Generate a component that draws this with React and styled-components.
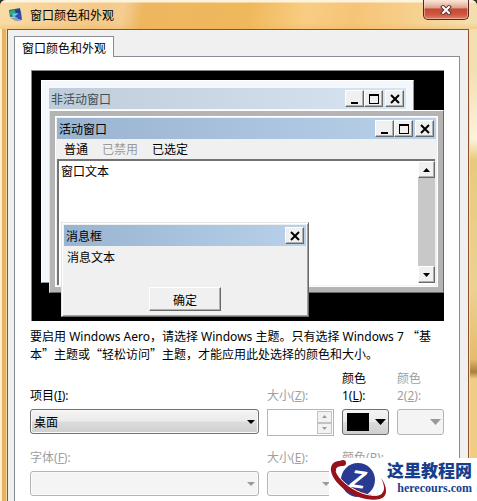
import React from 'react'
import styled, { createGlobalStyle, css } from 'styled-components'

const GlobalStyle = createGlobalStyle`
  * {
    box-sizing: border-box;
  }
  body {
    margin: 0;
    overflow: hidden;
    background: #3a3128;
    color: #000;
    font-family: 'Noto Sans CJK SC', 'Noto Sans', sans-serif;
    font-size: 12px;
    line-height: 17px;
  }
  button,
  input,
  select {
    margin: 0;
    padding: 0;
    color: inherit;
    font: inherit;
  }
  h1,
  p {
    margin: 0;
    font-size: 12px;
    font-weight: 400;
  }
`

const raised = css`
  background: #f0f0f0;
  border: 1px solid;
  border-color: #fff #696969 #696969 #fff;
  box-shadow: inset -1px -1px 0 #b0b0b0;
`

/* ---- outer dialog ---- */

const Dialog = styled.main`
  position: relative;
  display: flex;
  flex-direction: column;
  height: 100vh;
  padding: 0 8px;
  border-radius: 6px 6px 0 0;
  background:
    linear-gradient(90deg, #fdf0d2 0 2px, #e7b063 2px 6px, #f7dba5 6px 7px, #7c5a2c 7px 8px, transparent 8px)
      0 29px no-repeat,
    linear-gradient(#f3dfae, #f4dfb2 40px, #fdf2dc 110px, #e9ca7c 131px, #ecd191 260px, #e5bd6c 330px, #a97f3f 343px, #efcd85 350px)
      right 29px / 7px 100% no-repeat,
    #f5dfb2;
`

const TitleBar = styled.header`
  display: flex;
  flex: none;
  align-items: center;
  height: 29px;
  margin: 0 -8px;
  padding: 0 8px 0 9px;
  border-radius: 6px 6px 0 0;
  background:
    linear-gradient(#fdf4e0 0 2px, transparent 3px 23px, rgba(240, 180, 90, 0.4)),
    linear-gradient(
      100deg,
      #f9dca6 0,
      #f4c988 20%,
      #f5cd92 26%,
      #eeb65f 30%,
      #f0b85c 52%,
      #f8cd83 64%,
      #f6c477 74%,
      #f6d08d 86%,
      #f3dfae 98%
    );
  svg {
    margin-right: 7px;
  }
`

const Title = styled.h1`
  flex: 1;
  line-height: 17px;
`

const CloseButton = styled.button`
  display: flex;
  align-items: center;
  justify-content: center;
  align-self: flex-start;
  width: 46px;
  height: 20px;
  border: 1px solid #5b2420;
  border-top: 0;
  border-radius: 0 0 5px 5px;
  background: linear-gradient(#f8ecdc, #e0a48f 40%, #c24a36 48%, #cf5540 75%, #df8064);
  box-shadow: inset 0 0 0 1px rgba(255, 220, 205, 0.5);
  svg {
    margin: 0;
  }
`

const Client = styled.div`
  display: flex;
  flex: 1;
  flex-direction: column;
  padding: 6px 8px 0 6px;
  border-top: 1px solid #7c5a2c;
  border-right: 1px solid #8e4f2c;
  background: #f0f0f0;
`

const Tab = styled.button`
  position: relative;
  z-index: 1;
  align-self: flex-start;
  height: 21px;
  margin-bottom: -1px;
  padding: 0 7px;
  border: 1px solid #898c95;
  border-bottom: 0;
  background: #fff;
`

const TabPanel = styled.section`
  flex: 1;
  padding: 13px 15px 0;
  border: 1px solid #898c95;
  border-bottom: 0;
  background: #fff;
`

/* ---- preview desktop ---- */

const Desktop = styled.div`
  position: relative;
  height: 251px;
  margin-left: 1px;
  border: solid #8a8a8a;
  border-width: 1px 0 0 1px;
  background: #000;
`

const InactiveWindow = styled.div`
  position: absolute;
  top: 9px;
  right: 30px;
  bottom: 38px;
  left: 9px;
  padding: 7px;
  border: 1px solid;
  border-color: #fff #8f979f #8f979f #fff;
  background: #f4f8fd;
`

const ActiveWindow = styled.div`
  position: absolute;
  top: 39px;
  right: 0;
  bottom: 28px;
  left: 17px;
  padding: 1px;
  border: 1px solid;
  border-color: #fff #696969 #696969 #e3e3e3;
  background: #b4b4b4;
`

const ActiveBody = styled.div`
  display: flex;
  flex-direction: column;
  height: calc(100% - 8px);
  margin: 4px;
  padding: 1px;
  border: 1px solid #fff;
  background: #f0f0f0;
`

const MessageBox = styled.div`
  position: absolute;
  top: 151px;
  right: 135px;
  bottom: 4px;
  left: 29px;
  display: flex;
  flex-direction: column;
  padding: 1px;
  border: 1px solid;
  border-color: #e3e3e3 #696969 #696969 #e3e3e3;
  background: #f0f0f0;
  box-shadow: inset 1px 1px 0 #fff, inset -1px -1px 0 #a0a0a0;
`

const Caption = styled.div`
  display: flex;
  flex: none;
  align-items: center;
  height: 21px;
  padding: 0 2px;
  color: ${(props) => (props.$inactive ? '#434e54' : '#000')};
  background: ${(props) =>
    props.$inactive
      ? 'linear-gradient(90deg, #bfcddb, #d7e4f2)'
      : 'linear-gradient(90deg, #99b4d1, #b9d1ea)'};
  ${MessageBox} > & {
    margin: 1px;
  }
`

const CaptionText = styled.span`
  flex: 1;
`

const CaptionButton = styled.button`
  ${raised}
  display: flex;
  align-items: center;
  justify-content: center;
  width: 19px;
  height: 17px;
  margin-left: ${(props) => (props.$apart ? '2px' : '0')};
`

const MenuBar = styled.div`
  display: flex;
  flex: none;
  gap: 14px;
  height: 20px;
  padding: 0 7px 2px;
`

const MenuItem = styled.button`
  border: 0;
  background: none;
  line-height: 17px;
  &:disabled {
    color: #9b9b9b;
  }
`

const Document = styled.div`
  display: flex;
  flex: 1;
  margin-right: 1px;
  border: solid #737373;
  border-width: 2px 0 0 2px;
  background: #fff;
`

const DocumentText = styled.p`
  flex: 1;
  padding: 1px 2px;
`

const ScrollBar = styled.div`
  display: flex;
  flex-direction: column;
  justify-content: space-between;
  width: 17px;
  margin-bottom: 2px;
  background: #c8c8c8;
`

const ScrollButton = styled.button`
  ${raised}
  display: flex;
  align-items: center;
  justify-content: center;
  height: 17px;
`

const MessageText = styled.p`
  flex: 1;
  padding: 1px 4px;
`

const OkButton = styled.button`
  ${raised}
  align-self: center;
  width: 72px;
  height: 24px;
  margin-bottom: 4px;
`

/* ---- settings ---- */

const Hint = styled.p`
  margin-top: 6px;
`

const Latin = styled.span`
  font-family: 'Noto Sans', sans-serif;
`

const Fields = styled.div`
  display: grid;
  grid-template-columns: 1fr 67px 47px 47px;
  align-items: end;
  gap: 0 8px;
  margin-top: 8px;
`

const Label = styled.label`
  padding-bottom: 5px;
  font-family: 'Noto Sans', 'Noto Sans CJK SC', sans-serif;
  color: ${(props) => (props.$disabled ? '#a0a0a0' : '#000')};
`

const ControlCell = styled.div`
  align-self: start;
  margin-bottom: ${(props) => (props.$last ? '0' : '13px')};
`

const SelectBox = styled.div`
  display: grid;
  align-items: center;
  > * {
    grid-area: 1 / 1;
  }
  svg {
    justify-self: end;
    margin-right: 4px;
    pointer-events: none;
  }
`

const Select = styled.select`
  width: 100%;
  height: 25px;
  padding: 0 3px;
  border: 1px solid #707070;
  border-radius: 3px;
  appearance: none;
  background: linear-gradient(#f4f4f4, #ebebeb 48%, #dcdcdc 52%, #cfcfcf);
  box-shadow: inset 0 0 0 1px #fafafa;
  &:disabled {
    border-color: #b4b4b4;
    background: #f4f4f4;
    opacity: 1;
  }
`

const ColorButton = styled.button`
  display: flex;
  align-items: center;
  justify-content: space-between;
  width: 100%;
  height: 26px;
  padding: 0 2px 0 4px;
  border: 1px solid #707070;
  border-radius: 3px;
  background: linear-gradient(#f4f4f4, #ebebeb 48%, #dcdcdc 52%, #cfcfcf);
  &:disabled {
    border-color: #b4b4b4;
    background: #f4f4f4;
  }
`

const Swatch = styled.span`
  width: 22px;
  height: 18px;
  background: ${(props) => props.$color};
`

const Spinner = styled.div`
  display: flex;
  height: 27px;
  padding: 1px;
  border: 1px solid #b4b4b4;
  background: #fff;
  input {
    flex: 1;
    min-width: 0;
    border: 0;
    background: #fff;
  }
`

const SpinButtons = styled.div`
  display: grid;
  width: 15px;
  button {
    display: flex;
    align-items: center;
    justify-content: center;
    border: 1px solid #c2c2c2;
    background: #f2f2f2;
  }
`

/* ---- site mark over the corner ---- */

const SiteMark = styled.footer`
  position: absolute;
  right: 0;
  bottom: 0;
  display: flex;
  height: 43px;
  background: #fff;
`

const SiteName = styled.div`
  display: flex;
  flex-direction: column;
  align-items: flex-end;
  padding: 3px 5px 0 0;
  color: #173f8d;
  strong {
    font-size: 17px;
    font-weight: 900;
    line-height: 18px;
  }
  span {
    font-family: 'Liberation Serif', serif;
    font-size: 12px;
    font-weight: 700;
    line-height: 18px;
  }
`

const Triangle = ({ size = 9, up, color = '#000' }) => {
  const h = Math.ceil(size / 2)
  return (
    <svg width={size} height={h} viewBox={`0 0 ${size} ${h}`}>
      <path d={up ? `M0 ${h}H${size}L${size / 2} 0Z` : `M0 0H${size}L${size / 2} ${h}Z`} fill={color} />
    </svg>
  )
}

const glyphs = {
  min: <path d="M3 9h7v2H3z" fill="#000" />,
  max: <path d="M2 1h10v10H2zM3 3v7h8V3z" fill="#000" fillRule="evenodd" />,
  close: <path d="M3 2l8 8M11 2l-8 8" stroke="#000" strokeWidth="2" />,
}

const CaptionControl = ({ kind, label }) => (
  <CaptionButton type="button" aria-label={label} $apart={kind === 'close'}>
    <svg width="14" height="12" viewBox="0 0 14 12">
      {glyphs[kind]}
    </svg>
  </CaptionButton>
)

const CaptionControls = () => (
  <>
    <CaptionControl kind="min" label="最小化" />
    <CaptionControl kind="max" label="最大化" />
    <CaptionControl kind="close" label="关闭" />
  </>
)

const DialogIcon = () => (
  <svg width="14" height="14" viewBox="0 0 14 14">
    <path d="M0 2l11-2 1 8-11 1z" fill="#2b6b86" />
    <path d="M1 3l5-1 1 4-6 1z" fill="#35a878" />
    <path d="M6 2l5-1 1 5-5 0z" fill="#1f3f8c" />
    <path d="M3 6l6-1 1 3-6 1z" fill="#6cc3dc" />
    <path d="M6 8l6-4 1 8-5-1z" fill="#2c4bb8" />
    <path d="M1 10l6-1 5 4-5 0z" fill="#8fa5b5" />
  </svg>
)

const SiteLogo = () => (
  <svg width="58" height="43" viewBox="0 0 58 43">
    <circle cx="29" cy="22" r="17" fill="#293a92" />
    {/* orbit: thick at the lower right, ending in a dot at the upper left */}
    <path
      d="M14 3C6 2 1 6 2 13c2 12 19 25 35 28 12 2 20 0 20-8 0-5-2-9-5-13 3 6 4 11 2 14-3 5-11 4-20 0C20 29 7 19 7 12c0-3 3-4 7-4z"
      fill="#98121c"
    />
    <path d="M7 13c3 10 18 20 29 23 8 2 14 2 17-1" fill="none" stroke="#fff" strokeWidth="1" />
    <circle cx="14" cy="5" r="3" fill="#98121c" />
    <text
      x="29"
      y="30"
      fill="#fff"
      fontFamily="Liberation Sans, sans-serif"
      fontSize="25"
      fontWeight="700"
      fontStyle="italic"
      textAnchor="middle"
      transform="rotate(8 29 22)"
    >
      Z
    </text>
  </svg>
)

const FieldLabel = ({ id, text, hotkey, disabled }) => (
  <Label htmlFor={id} $disabled={disabled}>
    {text}(<u>{hotkey}</u>):
  </Label>
)

const DropDown = ({ id, options = [], disabled }) => (
  <SelectBox>
    <Select id={id} disabled={disabled}>
      {options.map((option) => (
        <option key={option}>{option}</option>
      ))}
    </Select>
    <Triangle size={8} color={disabled ? '#9a9a9a' : '#000'} />
  </SelectBox>
)

const Preview = () => (
  <Desktop>
    <InactiveWindow>
      <Caption $inactive>
        <CaptionText>非活动窗口</CaptionText>
        <CaptionControls />
      </Caption>
    </InactiveWindow>
    <ActiveWindow>
      <ActiveBody>
        <Caption>
          <CaptionText>活动窗口</CaptionText>
          <CaptionControls />
        </Caption>
        <MenuBar>
          <MenuItem type="button">普通</MenuItem>
          <MenuItem type="button" disabled>
            已禁用
          </MenuItem>
          <MenuItem type="button">已选定</MenuItem>
        </MenuBar>
        <Document>
          <DocumentText>窗口文本</DocumentText>
          <ScrollBar>
            <ScrollButton type="button" aria-label="向上滚动">
              <Triangle size={7} up />
            </ScrollButton>
            <ScrollButton type="button" aria-label="向下滚动">
              <Triangle size={7} />
            </ScrollButton>
          </ScrollBar>
        </Document>
      </ActiveBody>
    </ActiveWindow>
    <MessageBox>
      <Caption>
        <CaptionText>消息框</CaptionText>
        <CaptionControl kind="close" label="关闭" />
      </Caption>
      <MessageText>消息文本</MessageText>
      <OkButton type="button">确定</OkButton>
    </MessageBox>
  </Desktop>
)

const App = () => (
  <>
    <GlobalStyle />
    <Dialog>
      <TitleBar>
        <DialogIcon />
        <Title>窗口颜色和外观</Title>
        <CloseButton type="button" aria-label="关闭">
          <svg width="12" height="10" viewBox="0 0 12 10">
            <path d="M3 2l6 6M9 2l-6 6" stroke="#5d3434" strokeWidth="4" strokeLinecap="square" />
            <path d="M3 2l6 6M9 2l-6 6" stroke="#fff" strokeWidth="2" strokeLinecap="square" />
          </svg>
        </CloseButton>
      </TitleBar>
      <Client>
        <Tab type="button" role="tab" aria-selected="true">
          窗口颜色和外观
        </Tab>
        <TabPanel>
          <Preview />
          <Hint>
            要启用<Latin> Windows Aero</Latin>，请选择<Latin> Windows </Latin>主题。只有选择
            <Latin> Windows 7 </Latin>“基本”主题或“轻松访问”主题，才能应用此处选择的颜色和大小。
          </Hint>
          <Fields>
            <FieldLabel id="item" text="项目" hotkey="I" />
            <FieldLabel id="itemSize" text="大小" hotkey="Z" disabled />
            <Label htmlFor="color1">
              颜色
              <br />
              1(<u>L</u>):
            </Label>
            <Label htmlFor="color2" $disabled>
              颜色
              <br />
              2(<u>2</u>):
            </Label>
            <ControlCell>
              <DropDown id="item" options={['桌面']} />
            </ControlCell>
            <ControlCell>
              <Spinner>
                <input id="itemSize" type="text" disabled />
                <SpinButtons>
                  <button type="button" aria-label="增大" disabled>
                    <Triangle size={5} up color="#9a9a9a" />
                  </button>
                  <button type="button" aria-label="减小" disabled>
                    <Triangle size={5} color="#9a9a9a" />
                  </button>
                </SpinButtons>
              </Spinner>
            </ControlCell>
            <ControlCell>
              <ColorButton id="color1" type="button" aria-haspopup="listbox">
                <Swatch $color="#000" />
                <Triangle size={11} />
              </ColorButton>
            </ControlCell>
            <ControlCell>
              <ColorButton id="color2" type="button" aria-haspopup="listbox" disabled>
                <Swatch $color="transparent" />
                <Triangle size={11} color="#9a9a9a" />
              </ColorButton>
            </ControlCell>
            <FieldLabel id="font" text="字体" hotkey="F" disabled />
            <FieldLabel id="fontSize" text="大小" hotkey="E" disabled />
            <FieldLabel id="fontColor" text="颜色" hotkey="R" disabled />
            <span />
            <ControlCell $last>
              <DropDown id="font" disabled />
            </ControlCell>
            <ControlCell $last>
              <DropDown id="fontSize" disabled />
            </ControlCell>
            <ControlCell $last>
              <ColorButton id="fontColor" type="button" aria-haspopup="listbox" disabled />
            </ControlCell>
          </Fields>
        </TabPanel>
      </Client>
      <SiteMark>
        <SiteLogo />
        <SiteName>
          <strong>这里教程网</strong>
          <span>herecours.com</span>
        </SiteName>
      </SiteMark>
    </Dialog>
  </>
)

export default App
